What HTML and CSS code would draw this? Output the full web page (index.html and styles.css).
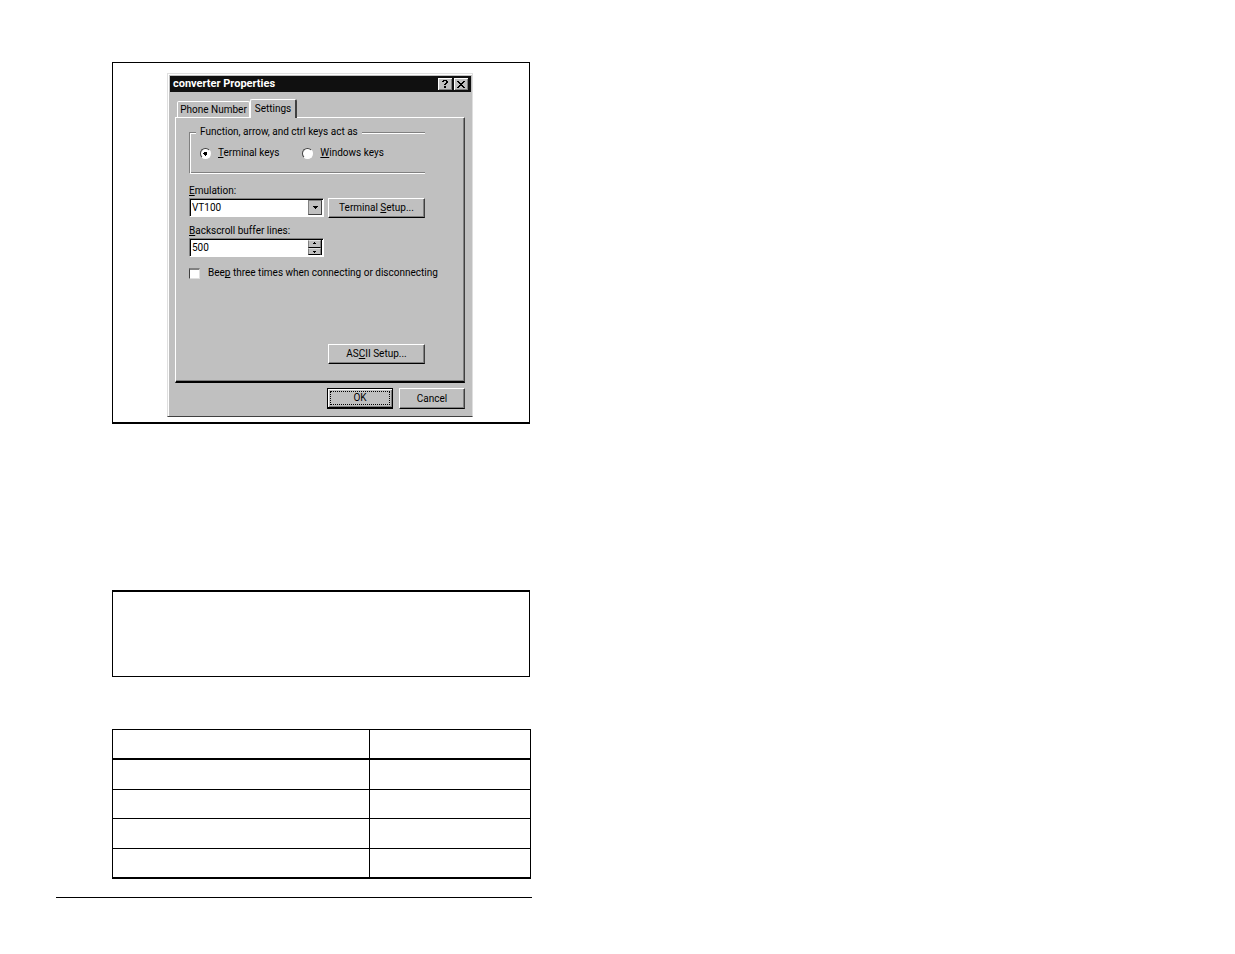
FILE: index.html
```html
<!DOCTYPE html>
<html lang="en">
<head>
<meta charset="utf-8">
<title>converter Properties</title>
<link rel="stylesheet" href="styles.css">
</head>
<body>
<main class="sheet">
  <figure class="figure">
    <section class="dialog" aria-labelledby="dialog-title">
      <header class="titlebar">
        <h1 class="title" id="dialog-title">converter Properties</h1>
        <button class="caption" type="button" aria-label="Help"><svg width="6" height="8" viewBox="0 0 6 8" shape-rendering="crispEdges"><path d="M1 0h4v1h1v2h-1v1h-1v1h-2v-1h1v-1h1v-2h-2v1h-2v-1h1zM2 6h2v2h-2z"/></svg></button>
        <button class="caption" type="button" aria-label="Close"><svg width="8" height="7" viewBox="0 0 8 7" shape-rendering="crispEdges"><path d="M0 0h2v1h1v1h2v-1h1v-1h2v1h-1v1h-1v1h-1v1h1v1h1v1h1v1h-2v-1h-1v-1h-2v1h-1v1h-2v-1h1v-1h1v-1h1v-1h-1v-1h-1v-1h-1z"/></svg></button>
      </header>
      <div class="tabs" role="tablist">
        <button class="tab" type="button" role="tab" aria-selected="false">Phone Number</button>
        <button class="tab tab-active" type="button" role="tab" aria-selected="true">Settings</button>
      </div>
      <form class="panel" id="settings">
        <fieldset class="group">
          <legend class="legend">Function, arrow, and ctrl keys act as</legend>
          <label class="option"><input class="radio" type="radio" name="keys" checked><span><u>T</u>erminal keys</span></label>
          <label class="option"><input class="radio" type="radio" name="keys"><span><u>W</u>indows keys</span></label>
        </fieldset>
        <label class="label" for="emulation"><u>E</u>mulation:</label>
        <div class="row">
          <div class="field">
            <select class="value" id="emulation"><option>VT100</option></select>
            <span class="drop" aria-hidden="true"><svg width="7" height="4" viewBox="0 0 7 4" shape-rendering="crispEdges"><path d="M1 0h5v1h-1v1h-1v1h-1v-1h-1v-1h-1z"/></svg></span>
          </div>
          <button class="button" type="button">Terminal <u>S</u>etup...</button>
        </div>
        <label class="label label-lines" for="lines"><u>B</u>ackscroll buffer lines:</label>
        <div class="field">
          <input class="value" id="lines" type="text" inputmode="numeric" value="500">
          <div class="spin">
            <button class="step" type="button" aria-label="More lines"><svg width="5" height="3" viewBox="0 0 5 3" shape-rendering="crispEdges"><path d="M2 0h1v1h1v1h-3v-1h1z"/></svg></button>
            <button class="step" type="button" aria-label="Fewer lines"><svg width="5" height="3" viewBox="0 0 5 3" shape-rendering="crispEdges"><path d="M1 1h3v1h-1v1h-1v-1h-1z"/></svg></button>
          </div>
        </div>
        <label class="check"><input class="box" type="checkbox"><span>Bee<u>p</u> three times when connecting or disconnecting</span></label>
        <div class="panel-end"><button class="button" type="button">AS<u>C</u>II Setup...</button></div>
      </form>
      <footer class="actions">
        <button class="button button-default" type="submit" form="settings"><span class="focus">OK</span></button>
        <button class="button button-small" type="button">Cancel</button>
      </footer>
    </section>
  </figure>
  <aside class="note"></aside>
  <table class="grid">
    <colgroup><col class="col-wide"><col></colgroup>
    <thead><tr><th></th><th></th></tr></thead>
    <tbody>
      <tr><td></td><td></td></tr>
      <tr><td></td><td></td></tr>
      <tr><td></td><td></td></tr>
      <tr><td></td><td></td></tr>
    </tbody>
  </table>
  <hr class="rule">
</main>
</body>
</html>
```

FILE: styles.css
```css
* { box-sizing: border-box; }

body {
  margin: 0;
  background: #fff;
  color: #000;
  font: 10px/12px Roboto, "Liberation Sans", Arial, sans-serif;
}

button, input, select {
  margin: 0;
  padding: 0;
  border: 0;
  border-radius: 0;
  appearance: none;
  color: inherit;
  font: inherit;
}

svg { display: block; fill: #000; }

u { text-underline-offset: 1px; text-decoration-thickness: 1px; text-decoration-skip-ink: none; }

.sheet {
  max-width: 532px;
  padding: 62px 0 56px 56px;
}

.figure, .note, .grid { margin: 0 2px 0 56px; }

.figure {
  padding: 10px 0 5px;
  border: 1px solid #000;
  border-bottom-width: 2px;
}

.dialog {
  max-width: 306px;
  margin: 0 auto 0 54px;
  padding: 2px 1px 7px 2px;
  border: 1px solid #dfdfdf;
  border-bottom-color: #404040;
  background: #c0c0c0;
  box-shadow: inset 1px 1px #fff;
}

.titlebar {
  display: flex;
  align-items: center;
  gap: 2px;
  height: 16px;
  padding: 0 3px;
  background: #101010;
}

.title {
  flex: 1;
  margin: 0;
  color: #fff;
  font-size: 11px;
  line-height: 16px;
}

.caption {
  display: grid;
  place-items: center;
  width: 14px;
  height: 12px;
  background: #c0c0c0;
  box-shadow: inset 1px 1px #fff, inset -1px -1px #808080;
}

.tabs {
  display: flex;
  align-items: flex-end;
  height: 25px;
  padding-left: 7px;
}

.tab {
  width: 73px;
  height: 16px;
  border: solid #fff;
  border-width: 1px 1px 0;
  border-radius: 2px 2px 0 0;
  background: #c0c0c0;
}

.tab-active {
  z-index: 1;
  width: 47px;
  height: 19px;
  margin-bottom: -1px;
  padding-bottom: 1px;
  border-right: 2px solid #404040;
}

.panel {
  margin: 0 6px 0 5px;
  padding: 8px 39px 17px 13px;
  border: 1px solid #fff;
  border-right-color: #404040;
  border-bottom: 2px solid #000;
  box-shadow: inset -1px -1px #808080;
}

.group {
  display: flex;
  gap: 23px;
  height: 48px;
  margin: 0;
  padding: 8px 0 0 10px;
  border: 1px solid #808080;
  border-right: 0;
  border-bottom-color: #fff;
  box-shadow: inset 0 1px #fff, inset 1px 0 #fff, inset 0 -1px #808080;
}

.legend { padding: 0 4px; margin-left: -4px; background: #c0c0c0; }

.option, .check { display: flex; align-items: center; }

.option { gap: 7px; height: 14px; }

.radio {
  flex: none;
  width: 11px;
  height: 11px;
  border: 1px solid #fff;
  border-top-color: #404040;
  border-left-color: #404040;
  border-radius: 50%;
  background: #fff;
}

.radio:checked { background: radial-gradient(circle, #000 2px, #fff 2px); }

.label { display: block; margin-top: 10px; line-height: 14px; }

.label-lines { margin-top: 6px; }

.row { display: flex; justify-content: space-between; }

.field {
  display: flex;
  width: 135px;
  height: 19px;
  padding: 1px;
  border: 1px solid #fff;
  border-top-color: #808080;
  border-left-color: #808080;
  background: #fff;
  box-shadow: inset 1px 1px #000;
}

.value {
  flex: 1;
  min-width: 0;
  padding-left: 1px;
  background: transparent;
}

.drop {
  display: grid;
  place-items: center;
  width: 14px;
  background: #c0c0c0;
  border: 1px solid #404040;
  border-top-color: #808080;
  border-left-color: #808080;
}

.spin {
  display: grid;
  grid-template-rows: 1fr 1fr;
  width: 14px;
  border-right: 1px solid #000;
}

.step {
  display: grid;
  place-items: center;
  background: #c0c0c0;
  border: 1px solid #808080;
  border-top-color: #dfdfdf;
  border-bottom-color: #000;
}

.button {
  width: 97px;
  height: 20px;
  border: 1px solid #fff;
  border-right-color: #404040;
  border-bottom-color: #000;
  background: #c0c0c0;
  box-shadow: inset -1px -1px #808080;
}

.check { gap: 8px; margin-top: 9px; height: 14px; white-space: nowrap; }

.box {
  flex: none;
  width: 11px;
  height: 11px;
  border: 1px solid #dfdfdf;
  border-top: 2px solid #808080;
  border-left-color: #404040;
  background: #fff;
}

.panel-end { display: flex; justify-content: flex-end; margin-top: 64px; }

.actions {
  display: flex;
  justify-content: flex-end;
  gap: 6px;
  margin: 5px 6px 0 0;
}

.button-small { width: 66px; height: 21px; }

.button-default {
  width: 66px;
  height: 21px;
  padding: 2px;
  border: 1px solid #000;
  border-bottom-width: 2px;
  box-shadow: inset 1px 1px #fff, inset -1px -1px #808080;
}

.focus { display: block; border: 1px dotted #000; line-height: 12px; }

.note {
  height: 87px;
  margin-top: 166px;
  border: 1px solid #000;
  border-top-width: 2px;
}

.grid {
  width: calc(100% - 57px);
  margin-top: 52px;
  margin-right: 1px;
  table-layout: fixed;
  border-collapse: separate;
  border-spacing: 0;
  border: solid #000;
  border-width: 1px 1px 0;
}

.col-wide { width: 257px; }

.grid th, .grid td {
  height: 30px;
  padding: 0;
  border-bottom: 1px solid #000;
}

.grid th { border-bottom-width: 2px; }

.grid tbody tr:nth-child(2) td { height: 29px; }

.grid tr > :first-child { border-right: 1px solid #000; }

.grid tbody tr:last-child td { border-bottom-width: 2px; }

.rule {
  margin: 18px 0 0;
  border: 0;
  border-top: 1px solid #000;
}
```
